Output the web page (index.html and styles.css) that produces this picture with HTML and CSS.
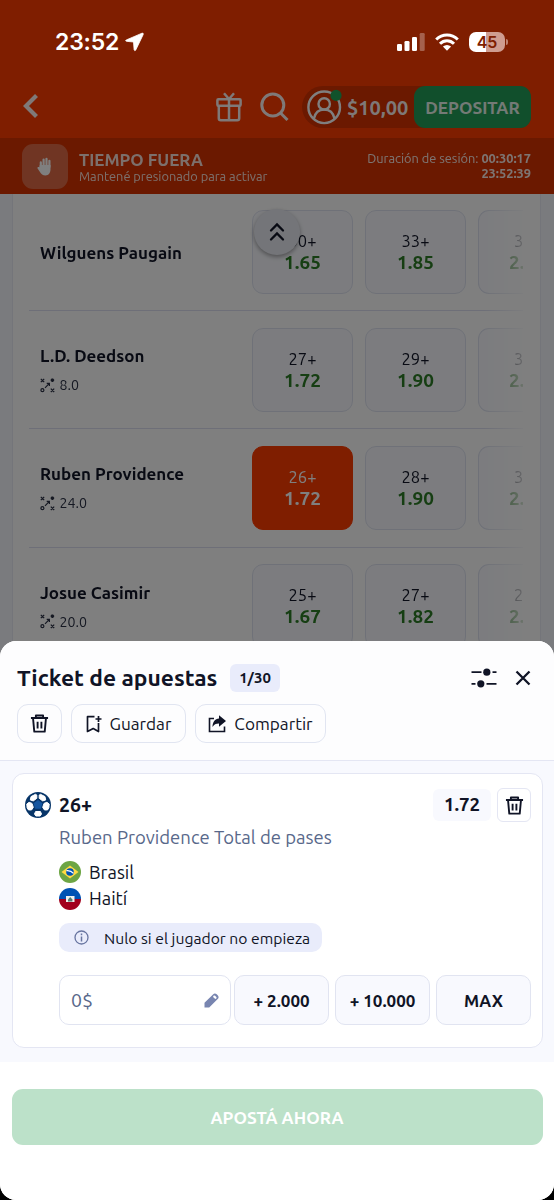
FILE: index.html
```html
<!DOCTYPE html>
<html lang="es">
<head>
<meta charset="utf-8">
<title>Ticket de apuestas</title>
<link rel="stylesheet" href="styles.css">
</head>
<body>
<svg class="defs" width="0" height="0">
  <symbol id="trash" viewBox="0 0 20 20"><path d="M1 4.2h18M6.2 4V1.6h7.600V4M3.200 4.500l1.300 14h11l1.300-14M8 8.200v7M12 8.200v7" fill="none" stroke="currentColor" stroke-width="2" stroke-linejoin="round"/></symbol>
  <symbol id="passes" viewBox="0 0 15 15"><g fill="none" stroke="currentColor" stroke-width="1.200"><path d="M.8.8l3.400 3.400M4.200.8L.8 4.200M10.800 10.600l3.400 3.400M14.200 10.600l-3.400 3.400M5 9.800l4.600-4.600M6.700 5.300h2.700V8M10.600 2.200h3.600M12.400.5v3.400M11.200 1l2.400 2.400M13.600 1l-2.400 2.400"/><circle cx="2.400" cy="12.200" r="1.500"/></g></symbol>
</svg>
<div class="screen">
  <main class="app">
    <header class="top">
      <nav class="nav">
        <svg class="back" width="16" height="25" viewBox="0 0 16 25"><path d="M13.500 1.500L3 12 13.500 22.500" fill="none" stroke="currentColor" stroke-width="4.200"/></svg>
        <svg class="gift" width="26" height="30" viewBox="0 0 26 30"><g fill="none" stroke="currentColor" stroke-width="2.500" stroke-linejoin="round"><rect x="1.400" y="7.200" width="23.200" height="6.600" rx="1"/><path d="M2.800 14v12.300q0 2 2 2h16.400q2 0 2-2V14M13 7.500V28M13 7L8 1.300M13 7l5-5.700"/></g></svg>
        <svg class="search" width="29" height="30" viewBox="0 0 29 30"><g fill="none" stroke="currentColor" stroke-width="3"><circle cx="12.800" cy="13" r="11"/><path d="M20.500 21l7 7"/></g></svg>
        <div class="wallet">
          <svg class="avatar" width="35" height="36" viewBox="0 0 35 36"><g fill="none" stroke="#fff" stroke-width="2.400"><circle cx="17.200" cy="18.300" r="15.800"/><circle cx="17.200" cy="14.900" r="5.700"/><path d="M6.800 29.800c1.400-6.400 5.500-9.300 10.400-9.300s9 2.900 10.400 9.300"/></g><circle cx="29" cy="6.400" r="5.600" fill="#21a457"/></svg>
          <span class="balance">$10,00</span>
          <button class="deposit">DEPOSITAR</button>
        </div>
      </nav>
      <section class="session">
        <span class="hand"><svg width="16" height="19" viewBox="0 0 16 19"><path d="M3.800 11V5.400M6.600 9V2.600M9.500 9V1.800M12.400 10V3.800" stroke="#fff" stroke-width="2.200" stroke-linecap="round"/><path d="M2.700 8h10.800v4.300c0 3.700-1.900 6.200-5 6.200-2.800 0-4.400-1.500-5.700-3.700L.6 11.500c-.7-1.300.9-2.200 1.800-1.100z" fill="#fff"/></svg></span>
        <div class="timeout"><b>TIEMPO FUERA</b><span>Mantené presionado para activar</span></div>
        <div class="duration"><span>Duración de sesión: <b>00:30:17</b></span><b>23:52:39</b></div>
      </section>
    </header>
    <section class="list">
      <div class="row"><div class="who"><b>Wilguens Paugain</b></div>
        <div class="odd"><span>30+</span><b>1.65</b></div><div class="odd"><span>33+</span><b>1.85</b></div><div class="odd edge"><span>3</span><b>2.</b></div></div>
      <div class="row"><div class="who"><b>L.D. Deedson</b><small><svg width="15" height="15"><use href="#passes"/></svg>8.0</small></div>
        <div class="odd"><span>27+</span><b>1.72</b></div><div class="odd"><span>29+</span><b>1.90</b></div><div class="odd edge"><span>3</span><b>2.</b></div></div>
      <div class="row"><div class="who"><b>Ruben Providence</b><small><svg width="15" height="15"><use href="#passes"/></svg>24.0</small></div>
        <div class="odd picked"><span>26+</span><b>1.72</b></div><div class="odd"><span>28+</span><b>1.90</b></div><div class="odd edge"><span>3</span><b>2.</b></div></div>
      <div class="row"><div class="who"><b>Josue Casimir</b><small><svg width="15" height="15"><use href="#passes"/></svg>20.0</small></div>
        <div class="odd"><span>25+</span><b>1.67</b></div><div class="odd"><span>27+</span><b>1.82</b></div><div class="odd edge"><span>2</span><b>2.</b></div></div>
    </section>
    <button class="to-top"><svg width="16" height="20" viewBox="0 0 16 20"><path d="M2 8.500l6-6 6 6M2 17.500l6-6 6 6" fill="none" stroke="#101426" stroke-width="2.300" stroke-linecap="round"/></svg></button>
  </main>
  <div class="shade"></div>
  <div class="status">
    <span class="clock">23:52</span>
    <svg class="location" width="19" height="20" viewBox="0 0 19 20"><path d="M17 1.200L1.200 8q-1.300.9.300 1.300l7 .7.600 7.700q.7 1.900 1.700.2L18.200 2.500Q18.600.7 17 1.200z" fill="#fff" stroke="#fff" stroke-width=".8"/></svg>
    <svg class="signal" width="28" height="18" viewBox="0 0 28 18"><g fill="#fff"><rect y="11" width="5" height="7" rx="1.300"/><rect x="7.500" y="8" width="5" height="10" rx="1.300"/><rect x="15" y="4" width="5" height="14" rx="1.300"/><rect x="22.700" width="5" height="18" rx="1.300" opacity=".3"/></g></svg>
    <svg class="wifi" width="24" height="18" viewBox="0 0 24 18"><g fill="none" stroke="#fff" stroke-width="3"><path d="M1.200 6.500c6.200-6 15.400-6 21.600 0"/><path d="M5 10.700c4-3.900 10-3.900 14 0"/></g><path d="M7.900 13.500q4.100-3.200 8.200 0L12 17.700z" fill="#fff"/></svg>
    <div class="battery">45</div>
  </div>
  <section class="sheet">
    <header class="sheet-head">
      <div class="title"><h1>Ticket de apuestas</h1><span class="count">1/30</span>
        <svg class="sliders" width="26" height="20" viewBox="0 0 26 20"><path d="M.5 4.200h10M21.500 4.200h4M.5 15.800h4M15.500 15.800h10" stroke="#101426" stroke-width="1.700"/><circle cx="15.800" cy="4.200" r="3.600"/><circle cx="9.800" cy="15.800" r="3.600"/></svg>
        <svg class="close" width="16" height="16" viewBox="0 0 16 16"><path d="M1.500 1.500l13 13M14.500 1.500l-13 13" stroke="#101426" stroke-width="2.300"/></svg>
      </div>
      <div class="tools">
        <button class="clear"><svg width="19" height="19"><use href="#trash"/></svg></button>
        <button class="save"><svg width="16" height="18" viewBox="0 0 16 18"><path d="M8.500 1.700H1.500V16.500l5.700-3 5.300 3V8M12.500 1v6M9.500 4h6" fill="none" stroke="currentColor" stroke-width="1.700" stroke-linejoin="round"/></svg><span>Guardar</span></button>
        <button class="share"><svg width="19" height="18" viewBox="0 0 19 18"><path d="M6 3.500H1.500V16.500h15v-5" fill="none" stroke="currentColor" stroke-width="1.600"/><path d="M11 .3L18 6l-7 5.700V8.500c-3.300 0-5 1-6.500 3.600C4.500 7 7 3.600 11 3.400z" fill="currentColor"/></svg><span>Compartir</span></button>
      </div>
    </header>
    <div class="slip">
      <article class="bet">
        <div class="pick">
          <svg width="26" height="26" viewBox="0 0 26 26"><circle cx="13" cy="13" r="13" fill="#073568"/><path d="M6 4.600l4.500-2.300 1.300.8v3.200L8.300 8.900 5.300 8zM20 4.600l-4.500-2.300-1.300.8v3.200l3.500 2.600 3-.9zM1.800 12l2.300-1.700 2.900 1.100 1.300 4-1.800 2.600-3.100-.1-1.300-2.200zM24.200 12l-2.300-1.700-2.900 1.100-1.300 4 1.800 2.600 3.100-.1 1.300-2.200zM10.600 19.500h4.800l1.100 2.500-1.400 2h-4.200L9.500 22z" fill="#fff" stroke="#fff" stroke-width="1" stroke-linejoin="round"/><path d="M13 8l4.500 3.300-1.700 5.400h-5.600l-1.700-5.400z" fill="#1556a0"/></svg>
          <b class="line">26+</b><span class="price">1.72</span>
          <button class="remove"><svg width="19" height="19"><use href="#trash"/></svg></button>
        </div>
        <div class="details">
          <p class="market">Ruben Providence Total de pases</p>
          <p class="team"><svg width="22" height="22" viewBox="0 0 22 22"><circle cx="11" cy="11" r="11" fill="#6da544"/><path d="M11 4.500L19.500 11 11 17.500 2.500 11z" fill="#ffda44"/><circle cx="11" cy="11" r="3.800" fill="#0052b4"/><path d="M7.500 9.700q4.300-.5 7 2.700" fill="none" stroke="#fff" stroke-width="1.200"/></svg><span>Brasil</span></p>
          <p class="team"><svg width="22" height="22" viewBox="0 0 22 22"><path d="M0 11a11 11 0 0 1 22 0z" fill="#0052b4"/><path d="M0 11a11 11 0 0 0 22 0z" fill="#a2001d"/><path d="M7 8h8.500v6H7z" fill="#f0f0f0"/><path d="M9 13.500v-2l2.200-2.500 2.200 2.500v2z" fill="#527a70"/></svg><span>Haití</span></p>
          <div class="note"><svg width="15" height="15" viewBox="0 0 15 15"><circle cx="7.500" cy="7.500" r="6.500" fill="none" stroke="#6875a0" stroke-width="1.300"/><path d="M7.500 3.500v1.700M7.500 6.500v5" stroke="#6875a0" stroke-width="1.500"/></svg><span>Nulo si el jugador no empieza</span></div>
          <div class="stake">
            <label class="amount"><span>0$</span><svg width="15" height="15" viewBox="0 0 15 15"><path d="M.5 14.500V9.800L9 1.400q1.900-1.800 3.700-.1l1 1q1.800 1.800 0 3.700L5.200 14.500z" fill="#7885b0"/><path d="M10.300 3.600l1.200 1.200" stroke="#fff" stroke-width="2.200" stroke-linecap="round"/></svg></label>
            <button>+ 2.000</button><button>+ 10.000</button><button>MAX</button>
          </div>
        </div>
      </article>
    </div>
    <footer class="foot"><button class="place">APOSTÁ AHORA</button></footer>
  </section>
</div>
</body>
</html>
```
FILE: styles.css
```css
* { box-sizing: border-box; }
body { margin: 0; background: #000; color: #101426; font-family: Ubuntu, "Noto Sans", sans-serif; }
button { font: inherit; color: inherit; padding: 0; margin: 0; border: 0; background: none; white-space: nowrap; }
h1, p { margin: 0; }
svg { display: block; flex: none; }
.defs { position: absolute; }
.screen { position: relative; width: 554px; height: 1200px; overflow: hidden; }
.app { height: 660px; overflow: hidden; background: #f5f6fd; position: relative; }
.top { background: #ff3c00; color: #fff; height: 194px; padding-top: 76px; }
.nav { height: 62px; display: flex; align-items: center; padding: 0 23px 0 23px; color: rgba(255,255,255,.94); }
.back { margin-bottom: 1px; }
.gift { margin-left: 177px; }
.search { margin-left: 18px; }
.wallet { margin-left: auto; width: 229px; height: 42px; border-radius: 21px 12px 12px 21px; background: #d63200; display: flex; align-items: center; padding-left: 5px; }
.balance { font-weight: 700; font-size: 20px; margin-left: 5px; }
.deposit { margin-left: auto; width: 117px; height: 42px; border-radius: 11px; background: #229f58; color: #e8f5ed; font-weight: 700; font-size: 17.200px; }
.session { height: 56px; background: #d63200; display: flex; align-items: center; padding: 0 23px 0 22px; color: #fff; line-height: 15px; }
.hand { width: 46px; height: 45px; border-radius: 11px; background: #e06b46; display: flex; align-items: center; justify-content: center; }
.timeout { margin-left: 11px; margin-top: 2px; display: flex; flex-direction: column; gap: 1px; font-size: 12.800px; opacity: .85; }
.timeout b { font-size: 17px; line-height: 17px; }
.duration { margin-left: auto; text-align: right; font-size: 12.800px; display: flex; flex-direction: column; opacity: .9; }
.list { margin: 0 13px 0 12px; height: 470px; padding: 0 17px 0 16px; background: #fff; border: solid #e9ebf5; border-width: 0 1px; overflow: hidden; }
.row { height: 118.300px; border-bottom: 1px solid #dcdff0; display: flex; align-items: center; gap: 12px; overflow: hidden; padding-left: 11px; -webkit-mask-image: linear-gradient(90deg,#000 455px,transparent 503px); mask-image: linear-gradient(90deg,#000 455px,transparent 503px); }
.row:first-child { height: 117px; }
.who { width: 200px; flex: none; font-size: 17px; line-height: 22px; padding-top: 1px; }
.who b { display: block; white-space: nowrap; }
.who small { display: flex; align-items: center; gap: 4.500px; font-size: 14.200px; line-height: 20px; margin-top: 8px; color: #2a3145; }
.odd { flex: none; width: 101px; height: 84px; border: 1px solid #dfe3f0; border-radius: 11px; background: #f8f9fe; display: flex; flex-direction: column; align-items: center; justify-content: center; font-size: 16.500px; line-height: 20px; }
.odd b { font-size: 19px; line-height: 22px; color: #2d7d26; }
.edge { width: 60px; border-right: 0; border-radius: 11px 0 0 11px; align-items: flex-start; padding-left: 30px; }
.edge span { padding-left: 5px; }
.picked { background: #ff3c00; border-color: #ff3c00; color: #fff; }
.picked b { color: #fff; }
.to-top { position: absolute; left: 254px; top: 209px; width: 46px; height: 46px; border-radius: 50%; background: #e9ebf2; box-shadow: 0 2px 4px rgba(0,0,0,.35); display: flex; align-items: center; justify-content: center; }
.shade { position: absolute; inset: 0 0 540px; background: rgba(0,0,0,.5); }
.status { position: absolute; left: 55px; top: 26px; width: 454px; height: 31px; display: flex; align-items: center; color: #fff; font-family: Inter, sans-serif; font-weight: 600; }
.clock { font-size: 23px; letter-spacing: -.2px; }
.location { margin-left: 6px; }
.signal { margin-left: auto; }
.wifi { margin-left: 10px; }
.battery { margin: 0 4px 0 10px; width: 36px; height: 20px; border-radius: 7px; background: linear-gradient(90deg,#fff 46%,#cf9d90 46%); color: #801e00; text-align: center; font-size: 16px; line-height: 20px; position: relative; }
.battery::after { content: ""; position: absolute; right: -3px; top: 7px; width: 2px; height: 6px; border-radius: 0 2px 2px 0; background: #bf8270; }
.sheet { position: absolute; left: 0; top: 641px; width: 554px; height: 559px; border-radius: 16px; background: #fff; overflow: hidden; display: flex; flex-direction: column; }
.sheet-head { height: 120px; border-bottom: 1px solid #e4e6f3; background: #fdfdfe; padding: 22px 23px 0 17px; }
.title { height: 30px; display: flex; align-items: center; }
.title h1 { width: 201px; font-size: 22.800px; line-height: 30px; white-space: nowrap; }
.count { margin-left: 12px; width: 50px; height: 28px; border-radius: 6px; background: #e9ecfb; text-align: center; font-weight: 700; font-size: 15px; line-height: 28px; }
.sliders { margin-left: auto; fill: #101426; }
.close { margin-left: 18px; }
.tools { display: flex; margin-top: 11px; font-size: 17.200px; }
.tools button { height: 39px; border: 1px solid #e1e5f1; border-radius: 11px; display: flex; align-items: center; justify-content: center; }
.clear { width: 45px; }
.save { width: 115px; margin-left: 9px; gap: 8px; }
.share { width: 131px; margin-left: 9px; gap: 7px; }
.slip { height: 301px; padding: 11px 11.500px 0; background: #f8f9fe; }
.bet { height: 275px; margin-top: 1px; background: #fff; border: 1px solid #e4e6f3; border-radius: 12px; padding: 14px 10.500px 0 12.500px; }
.pick { height: 34px; display: flex; align-items: center; }
.line { margin-left: 8px; font-size: 19.500px; }
.price { margin-left: auto; width: 58px; height: 32px; border-radius: 6px; background: #f8f9fe; font-weight: 700; font-size: 18.700px; line-height: 32px; text-align: center; }
.remove { margin-left: 6px; width: 34px; height: 34px; border: 1px solid #e4e6f3; border-radius: 6px; display: flex; align-items: center; justify-content: center; }
.details { padding-left: 34px; }
.market { font-size: 18.500px; line-height: 24px; margin: 3px 0 10px; color: #58688a; white-space: nowrap; }
.team { display: flex; align-items: center; gap: 8px; height: 26.500px; font-size: 18.300px; }
.team span { margin-top: -1px; }
.note { width: 263px; height: 29px; margin-top: 11px; border-radius: 10px; background: #e9ecfb; display: flex; align-items: center; padding-left: 15px; gap: 15px; font-size: 15.700px; white-space: nowrap; }
.stake { display: flex; margin-top: 23px; height: 50px; }
.amount { width: 172px; border: 1px solid #e1e4f1; border-radius: 10px; display: flex; align-items: center; justify-content: space-between; padding: 0 11px 0 11px; color: #58688a; font-size: 19.500px; }
.stake button { width: 95px; margin-left: 6px; border: 1px solid #e1e4f1; border-radius: 10px; background: #f8f9fe; font-weight: 700; font-size: 17px; }
.stake label + button { margin-left: 3px; }
.foot { flex: 1; padding: 27px 11.500px 0; background: #fff; }
.place { display: block; width: 531px; height: 56px; border-radius: 11px; background: #bce1c9; color: #fff; font-size: 17.200px; font-weight: 700; }
```
